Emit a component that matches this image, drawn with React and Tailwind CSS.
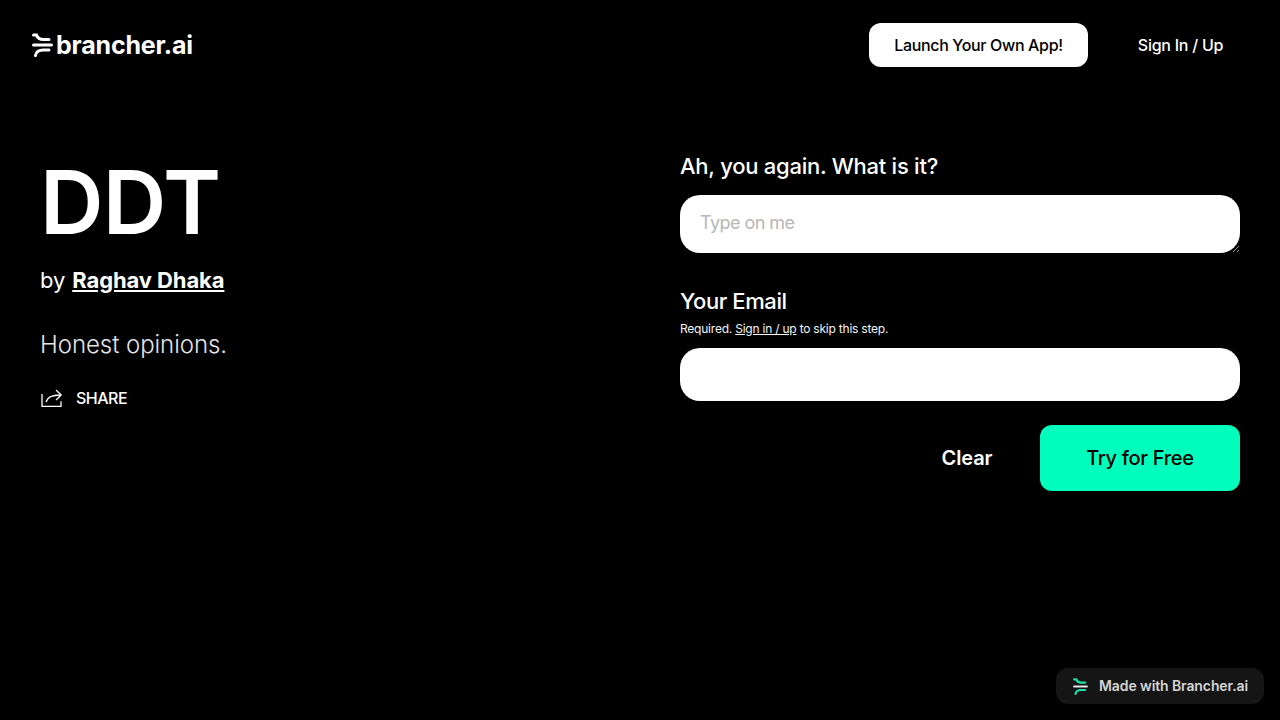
const font = { fontFamily: '"Inter", "Noto Sans", sans-serif' };

const BranchMark = ({ className, top = '#fff', mid = '#fff', sw = 3 }) => (
  <svg viewBox="0 0 21 24" fill="none" className={className}>
    <path d="M1.500 2h3c1 3 3 4.500 7 4.500h5.500" stroke={top} strokeWidth={sw} strokeLinecap="round" />
    <path d="M1.500 12h18" stroke={mid} strokeWidth={sw} strokeLinecap="round" />
    <path d="M17 17h-5.500c-5 0-7.500 2-8 5.500" stroke={top} strokeWidth={sw} strokeLinecap="round" />
  </svg>
);

const ShareIcon = () => (
  <svg viewBox="0 0 22 18" fill="none" stroke="#fff" strokeWidth="1.3" className="w-[22px] h-[18px] ml-px mr-[13px]">
    <path d="M1 5v12.300h19v-5" />
    <path d="M5 13c1-4.500 5-7 14.500-7" />
    <path d="M15 1l5.200 5-5.200 5" />
  </svg>
);

export default function App() {
  return (
    <div style={font} className="relative min-h-[720px] h-[720px] overflow-hidden bg-black text-white">
      {/* Header */}
      <header className="flex items-center justify-between h-[90px] pl-8 pr-8">
        <div className="flex items-center">
          <BranchMark className="w-[21px] h-[24px] mr-[3px]" />
          <span className="text-[25px] font-bold tracking-[-0.2px] leading-none">brancher.ai</span>
        </div>
        <div className="flex items-center">
          <button className="w-[219px] h-[44px] rounded-xl bg-white text-black text-base font-medium tracking-[-0.35px]">Launch Your Own App!</button>
          <button className="w-[135px] h-[44px] ml-[25px] text-base font-medium tracking-[-0.25px] text-white">Sign In / Up</button>
        </div>
      </header>

      <main className="flex px-10">
        {/* App info */}
        <section className="w-[640px] shrink-0 pt-[56px]">
          <h1 className="text-[88px] font-semibold tracking-[-0.7px] leading-[112px]">DDT</h1>
          <div className="flex items-center mt-[6px] h-[32px] text-[22px] tracking-[-0.1px]">
            <span className="mr-[7px] font-normal">by</span>
            <a className="font-bold underline">Raghav Dhaka</a>
          </div>
          <p className="mt-[33px] text-2xl font-light tracking-[-0.05px] leading-[32px] text-[#e5e5e5]">Honest opinions.</p>
          <div className="flex items-center mt-[23px] h-[28px] text-base font-medium tracking-[-0.5px]">
            <ShareIcon />
            SHARE
          </div>
        </section>

        {/* Form */}
        <section className="flex-1 pt-[60px]">
          <label className="block text-[22px] font-[550] tracking-[-0.25px] leading-[32px]">Ah, you again. What is it?</label>
          <textarea
            placeholder="Type on me"
            className="block w-full h-[58px] mt-[13px] rounded-[20px] bg-white px-5 py-[14px] text-lg tracking-[-0.55px] leading-[28px] text-black placeholder:text-[#b8b8b8] outline-none"
          />
          <label className="block mt-[32px] text-[22px] font-[550] tracking-[-0.4px] leading-[32px]">Your Email</label>
          <p className="text-xs leading-[20px] mt-[2px] tracking-[-0.22px] text-[#f5f5f5]">
            Required. <a className="underline">Sign in / up</a> to skip this step.
          </p>
          <input className="block w-full h-[53px] mt-[9px] rounded-[20px] bg-white px-5 text-lg text-black outline-none" />
          <div className="flex items-center justify-end mt-6">
            <button className="w-[146px] h-[66px] text-[20px] font-semibold tracking-[-0.1px] pl-[4px]">Clear</button>
            <button className="w-[200px] h-[66px] ml-[2px] rounded-xl bg-[#00ffbc] text-black text-[20px] font-medium tracking-[-0.3px]">Try for Free</button>
          </div>
        </section>
      </main>

      {/* Made with badge */}
      <div className="absolute right-4 bottom-4 flex items-center w-[208px] h-9 pl-[17px] rounded-xl bg-[#151515]">
        <BranchMark className="w-[15px] h-[17px] mr-[11px]" top="#1fe0a8" mid="#e5e5e5" />
        <span className="text-sm font-semibold tracking-[-0.1px] text-[#d4d4d4] whitespace-nowrap">Made with Brancher.ai</span>
      </div>
    </div>
  );
}
